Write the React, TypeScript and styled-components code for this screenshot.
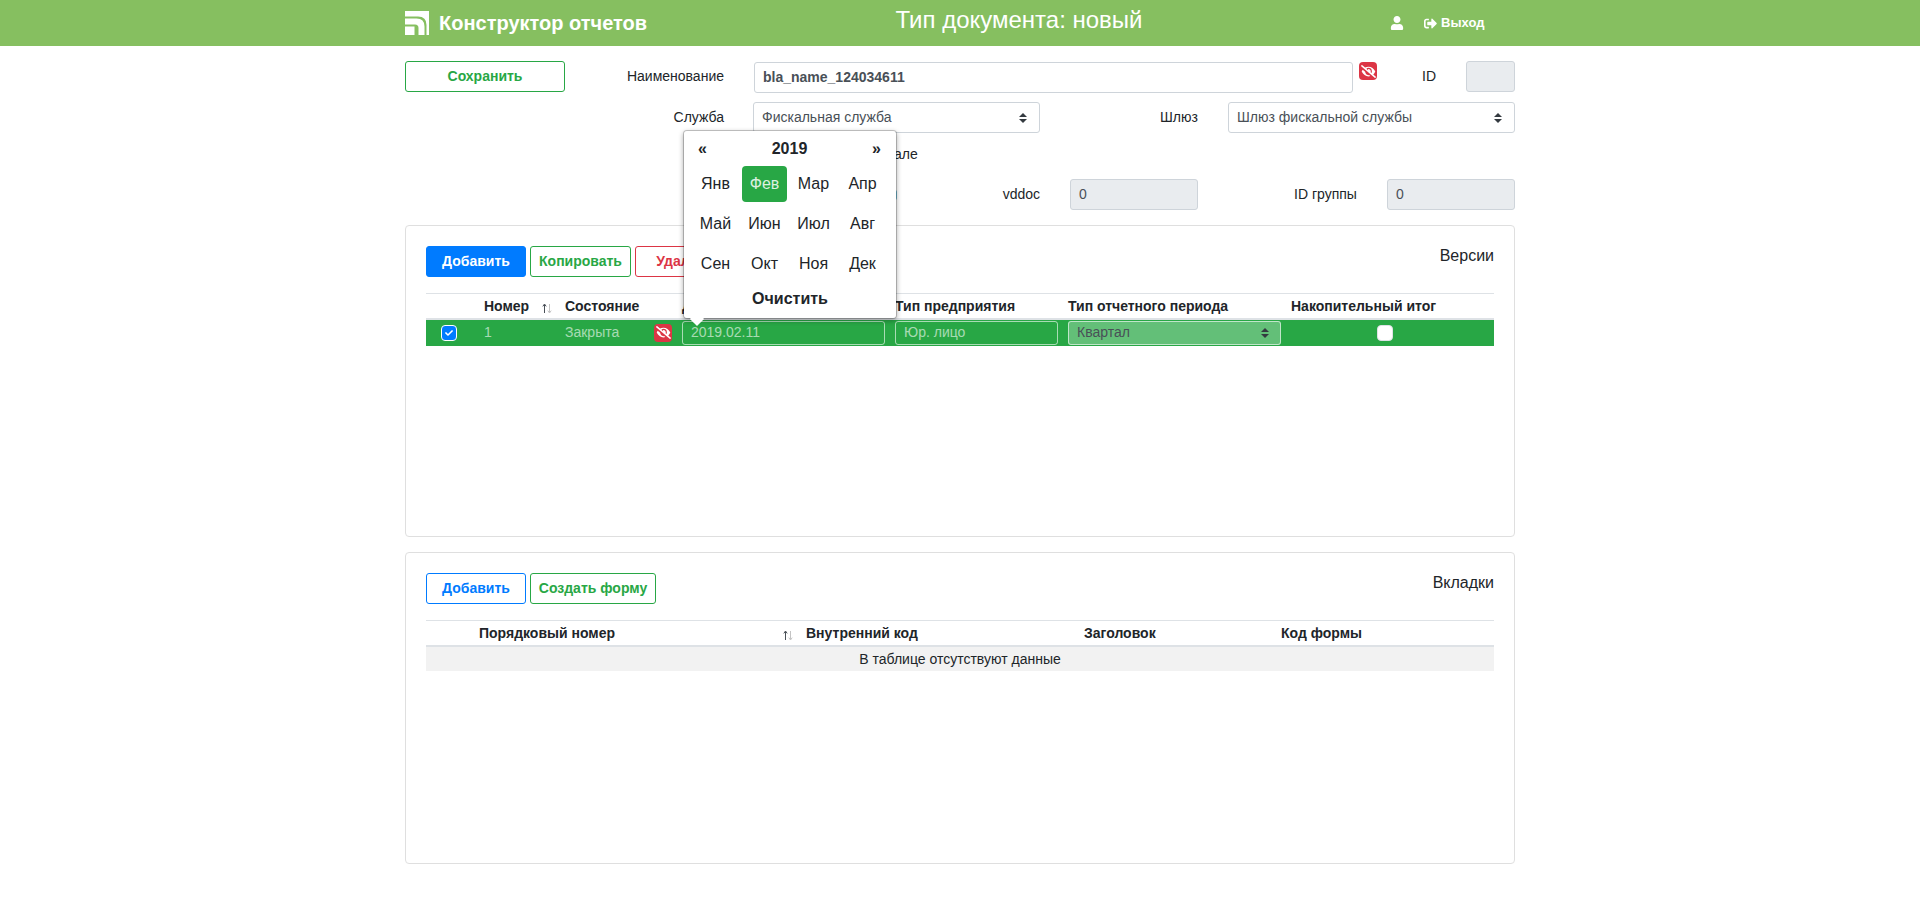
import React from "react";
import styled, { createGlobalStyle } from "styled-components";
import { FaCheck, FaEyeSlash, FaSignOutAlt, FaUser } from "react-icons/fa";

const GlobalStyle = createGlobalStyle`
  html, body { margin: 0; padding: 0; background: #fff; }
  body {
    font-family: "Liberation Sans", Arial, sans-serif;
    font-size: 14px;
    line-height: 1.5;
    color: #212529;
  }
  * { box-sizing: border-box; }
`;

const Header = styled.header`
  height: 46px;
  background: #86bf60;
  color: #fff;
`;

const HeaderInner = styled.div`
  width: 1110px;
  height: 46px;
  margin: 0 auto;
  display: grid;
  grid-template-columns: 429px 370px 1fr;
  align-items: center;
`;

const Brand = styled.div`
  display: flex;
  align-items: center;
  gap: 10px;
  font-size: 20px;
  font-weight: 700;
  white-space: nowrap;
`;

const PageTitle = styled.div`
  font-size: 24px;
  text-align: center;
  line-height: 36px;
  margin-top: -6px;
`;

const UserBox = styled.div`
  display: flex;
  align-items: center;
  padding-left: 186px;
  gap: 20px;
  font-size: 13px;
  font-weight: 700;
`;

const Logout = styled.span`
  display: flex;
  align-items: center;
  gap: 4px;
`;

const Page = styled.main`
  position: relative;
  width: 1110px;
  margin: 0 auto;
  padding-top: 15px;
`;

const FormRow = styled.div<{ $cols: string; $h?: number; $mb?: number }>`
  display: grid;
  grid-template-columns: ${(p) => p.$cols};
  align-items: center;
  height: ${(p) => p.$h ?? 31}px;
  margin-bottom: ${(p) => p.$mb ?? 10}px;
`;

const Label = styled.label<{ $right?: boolean }>`
  text-align: ${(p) => (p.$right ? "right" : "left")};
  white-space: nowrap;
`;

const Btn = styled.button<{ $color: string; $solid?: boolean; $w?: number }>`
  height: 31px;
  width: ${(p) => (p.$w ? `${p.$w}px` : "auto")};
  padding: 0 0 2px;
  font: 700 14px "Liberation Sans", Arial, sans-serif;
  white-space: nowrap;
  border: 1px solid ${(p) => p.$color};
  border-radius: 3px;
  color: ${(p) => (p.$solid ? "#fff" : p.$color)};
  background: ${(p) => (p.$solid ? p.$color : "#fff")};
`;

const Input = styled.div<{ $bold?: boolean; $disabled?: boolean }>`
  height: 31px;
  padding: 0 8px;
  display: flex;
  align-items: center;
  border: 1px solid #ced4da;
  border-radius: 3px;
  font-size: 14px;
  font-weight: ${(p) => (p.$bold ? 700 : 400)};
  color: #495057;
  background: ${(p) => (p.$disabled ? "#e9ecef" : "#fff")};
`;

const SelectBox = styled(Input)`
  justify-content: space-between;
  padding-right: 12px;
`;

const Updown = styled.svg`
  width: 8px;
  height: 10px;
  flex: none;
`;

const Arrows = ({ fill = "#343a40" }: { fill?: string }) => (
  <Updown viewBox="0 0 8 10">
    <path d="M4 0 8 4H0zM4 10 0 6h8z" fill={fill} />
  </Updown>
);

const EyeBadge = styled.span`
  width: 18px;
  height: 18px;
  display: flex;
  align-items: center;
  justify-content: center;
  border-radius: 4px;
  background: #dc3545;
  color: #fff;
`;

const EyeIcon = styled(FaEyeSlash)`
  width: 15px;
  height: 13px;
`;

const Eye = () => (
  <EyeBadge>
    <EyeIcon preserveAspectRatio="none" />
  </EyeBadge>
);

const NameCell = styled.div`
  display: flex;
  gap: 6px;
  align-items: flex-start;
  height: 31px;
  padding-top: 1px;
`;

const NameInput = styled(Input)`
  flex: 1;
`;

const HiddenLabel = styled.div`
  padding-left: 365px;
  height: 21px;
  line-height: 23px;
  margin-bottom: 15px;
`;

/* the hint button in the row below the label, nearly all of it under the open calendar */
const HintButton = styled.span`
  justify-self: end;
  width: 40px;
  height: 10px;
  margin-top: 1px;
  border-radius: 2px;
  background: #7cc8e2;
`;

const Card = styled.section`
  height: 312px;
  margin-bottom: 15px;
  padding: 20px;
  border: 1px solid #dfdfdf;
  border-radius: 4px;
`;

const Toolbar = styled.div`
  display: flex;
  align-items: flex-start;
  gap: 4px;
  height: 47px;
`;

const ToolbarTitle = styled.div`
  margin-left: auto;
  font-size: 16px;
  line-height: 20px;
`;

const Table = styled.table`
  width: 1068px;
  table-layout: fixed;
  border-collapse: collapse;
  border-top: 1px solid #dee2e6;
`;

const Th = styled.th`
  position: relative;
  height: 25px;
  padding: 2px 5px 0;
  text-align: left;
  font-size: 14px;
  white-space: nowrap;
  line-height: 21px;
  border-bottom: 2px solid #dee2e6;
`;

const SortMark = styled.svg`
  position: absolute;
  right: 8px;
  top: 9px;
  width: 10px;
  height: 11px;
`;

const Sort = () => (
  <SortMark viewBox="0 0 10 11">
    <path d="M2.5 10V1.5M.8 3.4 2.5 1l1.7 2.4" fill="none" stroke="#495057" strokeWidth="1" />
    <path d="M7.5 1v8.5M5.8 7.6 7.5 10l1.7-2.4" fill="none" stroke="#c4c4c4" strokeWidth="1" />
  </SortMark>
);

const GreenRow = styled.tr`
  background: #28a745;
  color: rgba(255, 255, 255, 0.6);
`;

const Td = styled.td`
  height: 27px;
  padding: 0 5px;
  line-height: 21px;
`;

const StateCell = styled.div`
  display: flex;
  justify-content: space-between;
  align-items: center;
`;

const CenterMark = styled.div`
  display: flex;
  justify-content: center;
  padding-right: 8px;
`;

const LastMark = styled(CenterMark)`
  padding-right: 10px;
`;

const Check = styled.span<{ $on?: boolean }>`
  width: 16px;
  height: 16px;
  display: flex;
  align-items: center;
  justify-content: center;
  border-radius: 4px;
  color: #fff;
  font-size: 8px;
  background: ${(p) => (p.$on ? "#007bff" : "#fff")};
  border: 1px solid ${(p) => (p.$on ? "#fff" : "#dee2e6")};
`;

const RowInput = styled.div`
  height: 24px;
  padding: 0 8px;
  display: flex;
  align-items: center;
  justify-content: space-between;
  border: 1px solid rgba(255, 255, 255, 0.6);
  border-radius: 3px;
  font-size: 14px;
`;

const RowSelect = styled(RowInput)`
  background: rgba(255, 255, 255, 0.28);
  color: #495057;
  padding-right: 11px;
`;

const EmptyCell = styled.td`
  height: 24px;
  padding: 0;
  background: #f2f2f2;
  text-align: center;
  line-height: 24px;
`;

const Popover = styled.div`
  position: absolute;
  left: 278px;
  top: 84px;
  width: 214px;
  height: 189px;
  padding: 4px 10px 0;
  background: #fff;
  background-clip: padding-box;
  border: 1px solid rgba(0, 0, 0, 0.2);
  border-radius: 4px;
  box-shadow: 0 2px 5px rgba(0, 0, 0, 0.3);
  &::after {
    content: "";
    position: absolute;
    left: 8px;
    bottom: -6px;
    width: 10px;
    height: 10px;
    background: #fff;
    transform: rotate(45deg);
  }
`;

const PopHead = styled.div`
  display: flex;
  justify-content: space-between;
  align-items: center;
  height: 28px;
  padding: 0 5px 0 4px;
  font-size: 16px;
  font-weight: 700;
`;

const Months = styled.div`
  display: grid;
  grid-template-columns: repeat(4, 45px);
  grid-auto-rows: 36px;
  gap: 4px;
  margin: 3px -1px 0 -1px;
`;

const Month = styled.div<{ $active?: boolean }>`
  display: flex;
  align-items: center;
  justify-content: center;
  font-size: 16px;
  border-radius: 4px;
  color: ${(p) => (p.$active ? "rgba(255,255,255,0.85)" : "#212529")};
  background: ${(p) => (p.$active ? "#28a745" : "transparent")};
`;

const Clear = styled.div`
  margin-top: 5px;
  text-align: center;
  font-size: 16px;
  font-weight: 700;
`;

const Logo = () => (
  <svg width="24" height="24" viewBox="0 0 24 24">
    <path
      fill="#fff"
      d="M0 0h24v24h-2.5V14Q21.5 5.5 13 5.5H0zM0 7.5h11.5Q19.5 7.5 19.5 15.5V24H13.5V17Q13.5 13.5 10 13.5H0zM0 15.5h9.5V24H0z"
    />
  </svg>
);

const MONTHS = ["Янв", "Фев", "Мар", "Апр", "Май", "Июн", "Июл", "Авг", "Сен", "Окт", "Ноя", "Дек"];

const App = () => (
  <>
    <GlobalStyle />
    <Header>
      <HeaderInner>
        <Brand>
          <Logo />
          Конструктор отчетов
        </Brand>
        <PageTitle>Тип документа: новый</PageTitle>
        <UserBox>
          <FaUser size={14} />
          <Logout>
            <FaSignOutAlt size={13} />
            Выход
          </Logout>
        </UserBox>
      </HeaderInner>
    </Header>
    <Page>
      <FormRow $cols="160px 159px 30px 623px 45px 44px 49px">
        <Btn $color="#28a745" $w={160}>Сохранить</Btn>
        <Label $right>Наименование</Label>
        <span />
        <NameCell>
          <NameInput $bold>bla_name_124034611</NameInput>
          <Eye />
        </NameCell>
        <span />
        <Label>ID</Label>
        <Input $disabled />
      </FormRow>
      <FormRow $cols="319px 29px 287px 120px 68px 287px">
        <Label $right>Служба</Label>
        <span />
        <SelectBox>Фискальная служба<Arrows /></SelectBox>
        <span />
        <Label>Шлюз</Label>
        <SelectBox>Шлюз фискальной службы<Arrows /></SelectBox>
      </FormRow>
      <HiddenLabel>Показывать в журнале</HiddenLabel>
      <FormRow $cols="492px 143px 30px 128px 96px 93px 128px" $mb={15}>
        <HintButton />
        <Label $right>vddoc</Label>
        <span />
        <Input $disabled>0</Input>
        <span />
        <Label>ID группы</Label>
        <Input $disabled>0</Input>
      </FormRow>

      <Card>
        <Toolbar>
          <Btn $color="#007bff" $solid $w={100}>Добавить</Btn>
          <Btn $color="#28a745" $w={101}>Копировать</Btn>
          <Btn $color="#dc3545" $w={100}>Удалить</Btn>
          <ToolbarTitle>Версии</ToolbarTitle>
        </Toolbar>
        <Table>
          <colgroup>
            <col width={53} />
            <col width={81} />
            <col width={117} />
            <col width={213} />
            <col width={173} />
            <col width={223} />
            <col width={208} />
          </colgroup>
          <thead>
            <tr>
              <Th />
              <Th>Номер<Sort /></Th>
              <Th>Состояние</Th>
              <Th>Дата начала</Th>
              <Th>Тип предприятия</Th>
              <Th>Тип отчетного периода</Th>
              <Th>Накопительный итог</Th>
            </tr>
          </thead>
          <tbody>
            <GreenRow>
              <Td><CenterMark><Check $on><FaCheck /></Check></CenterMark></Td>
              <Td>1</Td>
              <Td><StateCell>Закрыта<Eye /></StateCell></Td>
              <Td><RowInput>2019.02.11</RowInput></Td>
              <Td><RowInput>Юр. лицо</RowInput></Td>
              <Td><RowSelect>Квартал<Arrows /></RowSelect></Td>
              <Td><LastMark><Check /></LastMark></Td>
            </GreenRow>
          </tbody>
        </Table>
      </Card>

      <Card>
        <Toolbar>
          <Btn $color="#007bff" $w={100}>Добавить</Btn>
          <Btn $color="#28a745" $w={126}>Создать форму</Btn>
          <ToolbarTitle>Вкладки</ToolbarTitle>
        </Toolbar>
        <Table>
          <colgroup>
            <col width={48} />
            <col width={327} />
            <col width={278} />
            <col width={197} />
            <col width={218} />
          </colgroup>
          <thead>
            <tr>
              <Th />
              <Th>Порядковый номер<Sort /></Th>
              <Th>Внутренний код</Th>
              <Th>Заголовок</Th>
              <Th>Код формы</Th>
            </tr>
          </thead>
          <tbody>
            <tr>
              <EmptyCell colSpan={5}>В таблице отсутствуют данные</EmptyCell>
            </tr>
          </tbody>
        </Table>
      </Card>

      <Popover>
        <PopHead>
          <span>«</span>
          <span>2019</span>
          <span>»</span>
        </PopHead>
        <Months>
          {MONTHS.map((m) => (
            <Month key={m} $active={m === "Фев"}>{m}</Month>
          ))}
        </Months>
        <Clear>Очистить</Clear>
      </Popover>
    </Page>
  </>
);

export default App;
